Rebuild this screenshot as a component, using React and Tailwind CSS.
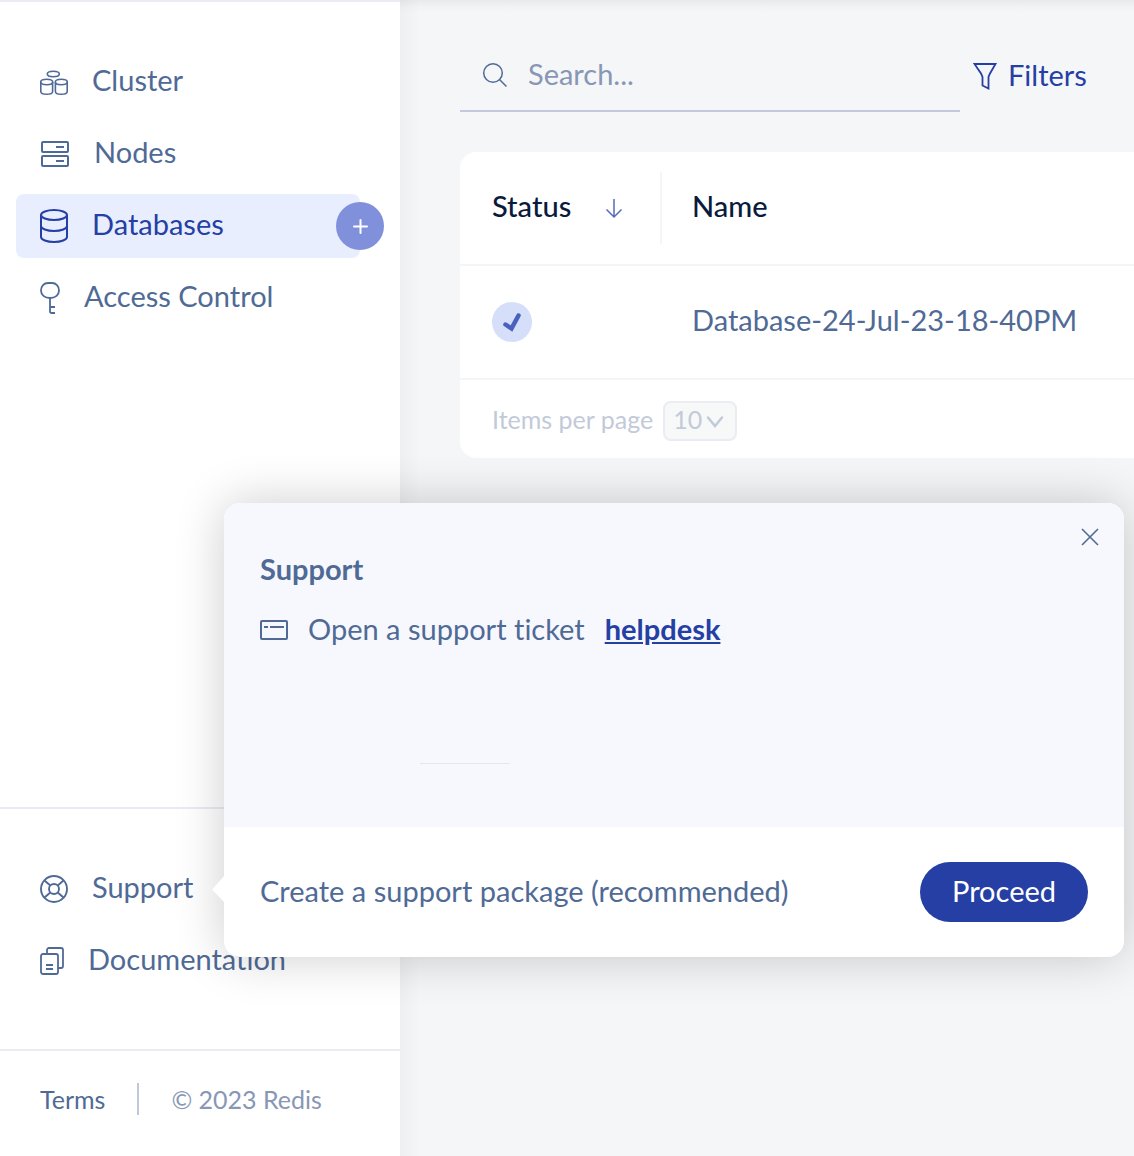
import React from "react";

const navText = "text-[#506a96]";

function ClusterIcon() {
  return (
    <svg width="28" height="32" viewBox="0 0 28 32" fill="none" stroke="currentColor" strokeWidth="1.6">
      <ellipse cx="13.3" cy="8" rx="6" ry="2.7" />
      <ellipse cx="6.7" cy="16" rx="6" ry="2.7" />
      <path d="M.8 16v9.5c0 1.6 2.600 2.800 5.900 2.800s5.900-1.200 5.900-2.800V16" />
      <ellipse cx="21.3" cy="16" rx="6" ry="2.7" />
      <path d="M15.400 16v9.500c0 1.600 2.600 2.800 5.900 2.800s5.900-1.200 5.900-2.800V16" />
    </svg>
  );
}

function NodesIcon() {
  return (
    <svg width="30" height="32" viewBox="0 0 30 32" fill="none" stroke="currentColor" strokeWidth="2">
      <rect x="2" y="4" width="26" height="10" rx="1" />
      <rect x="2" y="18" width="26" height="10" rx="1" />
      <path d="M16 9h8M16 23h8" />
    </svg>
  );
}

function DatabaseIcon() {
  return (
    <svg width="28" height="36" viewBox="0 0 28 36" fill="none" stroke="currentColor" strokeWidth="2">
      <ellipse cx="14" cy="7" rx="13" ry="5" />
      <path d="M1 7v22c0 2.800 5.800 5 13 5s13-2.200 13-5V7" />
      <path d="M1 18c0 2.800 5.800 5 13 5s13-2.200 13-5" />
    </svg>
  );
}

function KeyIcon() {
  return (
    <svg width="20" height="36" viewBox="0 0 20 36" fill="none" stroke="currentColor" strokeWidth="1.8">
      <path d="M8 3h4c4 0 7 3.200 7 7.500S15.500 18 10 18s-9-3.200-9-7.500S4 3 8 3Z" />
      <path d="M10 18v13.500c0 1 .8 1.500 1.800 1.500H15M10 27h5" />
    </svg>
  );
}

function SupportIcon() {
  return (
    <svg width="28" height="28" viewBox="0 0 28 28" fill="none" stroke="currentColor" strokeWidth="1.9">
      <circle cx="14" cy="14" r="13" />
      <circle cx="14" cy="14" r="5" />
      <path d="m4.500 5.500 5.800 5M23.500 5.500l-5.800 5M4.500 22.500l5.800-5M23.500 22.500l-5.800-5" />
    </svg>
  );
}

function DocsIcon() {
  return (
    <svg width="24" height="28" viewBox="0 0 24 28" fill="none" stroke="currentColor" strokeWidth="1.8">
      <rect x="1" y="7" width="17" height="20" rx="2" />
      <path d="M7 7V3a2 2 0 0 1 2-2h12a2 2 0 0 1 2 2v16a2 2 0 0 1-2 2h-3" />
      <path d="M6 18h7M6 22h7" />
    </svg>
  );
}

function NavLink({ icon, label }) {
  return (
    <a href="#" className={`flex h-16 items-center gap-6 rounded-lg pl-6 ${navText}`}>
      {icon}
      <span className="pb-1">{label}</span>
    </a>
  );
}

function Sidebar() {
  return (
    <aside className="flex w-100 shrink-0 flex-col border-t-2 border-[#ebecf1] bg-white">
      <nav aria-label="Main" className="flex flex-1 flex-col gap-2 px-4 pt-12">
        <NavLink icon={<ClusterIcon />} label="Cluster" />
        <NavLink icon={<NodesIcon />} label="Nodes" />
        <div className="flex items-center">
          <a
            href="#"
            aria-current="page"
            className="flex h-16 flex-1 items-center gap-6 rounded-lg bg-[#e8eefd] pl-6 text-[#253fa5]"
          >
            <DatabaseIcon />
            <span className="pb-1">Databases</span>
          </a>
          <button
            type="button"
            aria-label="Add database"
            className="-ml-6 flex size-12 items-center justify-center rounded-full bg-[#8090db] text-white"
          >
            <svg width="16" height="16" viewBox="0 0 16 16" fill="none" stroke="currentColor" strokeWidth="2" strokeLinecap="round">
              <path d="M8.500 2v13M2 8.500h13" />
            </svg>
          </button>
        </div>
        <NavLink icon={<KeyIcon />} label="Access Control" />
      </nav>
      <nav aria-label="Help" className="flex flex-col gap-2 border-t-2 border-[#ebecf1] px-4 pt-12 pb-14">
        <NavLink icon={<SupportIcon />} label="Support" />
        <NavLink icon={<DocsIcon />} label="Documentation" />
      </nav>
      <footer className="flex items-center border-t-2 border-[#ebecf1] px-10 pt-8 pb-[41px] text-[25px] leading-8">
        <a href="#" className="text-[#506a96]">Terms</a>
        <span className="mx-8 h-8 w-0.5 bg-[#c0c9da]" />
        <span className="text-[#8797b5]">© 2023 Redis</span>
      </footer>
    </aside>
  );
}

function Toolbar() {
  return (
    <div className="flex items-center">
      <label className="flex h-18 w-125 items-center gap-5 border-b-2 border-[#c2c9dc] pl-[22px] text-[#506a96]">
        <svg width="26" height="26" viewBox="0 0 26 26" fill="none" stroke="currentColor" strokeWidth="1.5">
          <circle cx="11" cy="11" r="9.3" />
          <path d="m17.500 17.500 7 7" />
        </svg>
        <input
          type="search"
          aria-label="Search"
          placeholder="Search..."
          className="min-w-0 flex-1 bg-transparent pb-0.5 outline-none placeholder:text-[#8797b5]"
        />
      </label>
      <button type="button" className="ml-3 flex items-center gap-2.5 text-[#253fa5]">
        <svg width="26" height="28" viewBox="0 0 26 28" fill="none" stroke="currentColor" strokeWidth="1.8">
          <path d="M2.500 2h21l-5.500 9.500-1.500 3.500v11.500L10.500 23.500V15L9 11.500Z" />
        </svg>
        <span className="pb-0.5">Filters</span>
      </button>
    </div>
  );
}

function DatabaseTable() {
  return (
    <section className="mt-10 rounded-l-2xl bg-white">
      <table className="w-full table-fixed border-separate border-spacing-0 text-left">
        <thead>
          <tr className="h-28.5">
            <th scope="col" className="w-[202px] border-b-2 border-[#f4f5f6] p-0 font-medium text-[#091a3e]">
              <div className="flex h-18 items-center justify-between border-r-2 border-[#f4f5f6] pr-9 pl-8">
                <span className="pb-1">Status</span>
                <svg className="text-[#5868bd]" width="20" height="22" viewBox="0 0 20 22" fill="none" stroke="currentColor" strokeWidth="1.5">
                  <path d="M10 2v18M2.500 12.500 10 20l7.500-7.500" />
                </svg>
              </div>
            </th>
            <th scope="col" className="border-b-2 border-[#f4f5f6] p-0 pb-1 pl-[30px] font-medium text-[#091a3e]">Name</th>
          </tr>
        </thead>
        <tbody>
          <tr className="h-28.5">
            <td className="border-b-2 border-[#f4f5f6] p-0 pl-8">
              <svg role="img" aria-label="Active" width="40" height="40" viewBox="0 0 40 40" fill="none">
                <circle cx="20" cy="20" r="20" fill="#d5dffa" />
                <path d="m13.500 22.500 6 4 7-13" stroke="#4a62bd" strokeWidth="4.5" strokeLinecap="round" />
              </svg>
            </td>
            <td className="border-b-2 border-[#f4f5f6] p-0 pb-1 pl-[30px] whitespace-nowrap text-[#506a96]">Database-24-Jul-23-18-40PM</td>
          </tr>
        </tbody>
      </table>
      <div className="flex h-[78px] items-center gap-2.5 pt-1 pl-8 text-[25px] leading-8 text-[#c2cad9]">
        <label htmlFor="page-size" className="pb-1">Items per page</label>
        <span className="grid items-center">
          <select
            id="page-size"
            className="col-start-1 row-start-1 h-10 w-[74px] appearance-none rounded-lg border-2 border-[#ebecf1] bg-[#f7f9f9] pb-1 pl-2 leading-none"
          >
            <option>10</option>
          </select>
          <svg className="pointer-events-none col-start-1 row-start-1 mr-3 justify-self-end" width="20" height="16" viewBox="0 0 20 16" fill="none" stroke="currentColor" strokeWidth="2.5" strokeLinecap="round">
            <path d="m3 4.500 7 8.500 7-8.500" />
          </svg>
        </span>
      </div>
    </section>
  );
}

function SupportPopover() {
  return (
    <div
      role="dialog"
      aria-labelledby="support-title"
      className="absolute right-2.5 bottom-[199px] left-56 rounded-2xl bg-white text-[#506a96] shadow-[0_0_50px_rgba(0,0,0,0.2)]"
    >
      <svg className="absolute bottom-[54px] -left-3 text-white" width="13" height="28" viewBox="0 0 13 28" fill="currentColor">
        <path d="M13 0v28L0 14.500Z" />
      </svg>
      <div className="flex h-81 flex-col rounded-t-2xl bg-[#f6f8fd] px-9 pt-6">
        <div className="flex justify-end">
          <button type="button" aria-label="Close" className="-mr-3">
            <svg width="20" height="20" viewBox="0 0 20 20" fill="none" stroke="currentColor" strokeWidth="1.6">
              <path d="m2 2 16 16M18 2 2 18" />
            </svg>
          </button>
        </div>
        <h2 id="support-title" className="mt-1 font-bold">Support</h2>
        <div className="mt-6 flex items-center gap-5">
          <svg width="28" height="24" viewBox="0 0 28 24" fill="none" stroke="currentColor" strokeWidth="2">
            <rect x="1" y="4" width="26" height="18" rx="1" />
            <path d="M4 10h4M10 10h14" />
          </svg>
          <p>
            Open a support ticket
            <a href="#" className="ml-5 font-bold text-[#253fa5] underline">helpdesk</a>
          </p>
        </div>
        <hr className="mt-auto mb-[63px] ml-40 w-[90px] border-[#e5e7f0]" />
      </div>
      <div className="flex h-32.5 items-center justify-between px-9">
        <p className="pb-0.5">Create a support package (recommended)</p>
        <button type="button" className="h-15 rounded-full bg-[#253fa5] px-8 pb-0.5 text-white">Proceed</button>
      </div>
    </div>
  );
}

export default function App() {
  return (
    <div className="relative flex min-h-screen overflow-hidden bg-[#f5f6f8] font-['Lato',sans-serif] text-[29px] leading-9 [font-variant-ligatures:none]">
      <Sidebar />
      <main className="min-w-0 flex-1 bg-linear-to-r from-[#eeeff1] to-[#f5f6f8] to-[20px] pt-10 pl-15 shadow-[inset_0_14px_14px_-14px_rgba(0,0,0,0.1)]">
        <Toolbar />
        <DatabaseTable />
      </main>
      <SupportPopover />
    </div>
  );
}
